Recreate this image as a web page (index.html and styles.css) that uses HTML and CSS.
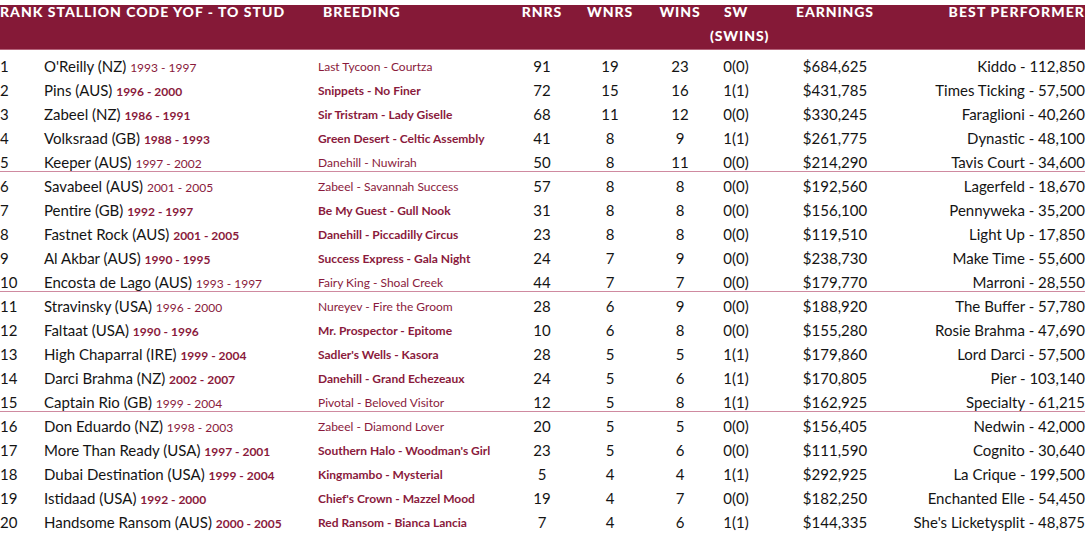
FILE: index.html
```html
<!DOCTYPE html>
<html>
<head>
<meta charset="utf-8">
<link rel="stylesheet" href="styles.css">
</head>
<body>
<div class="table">
  <div class="head">
    <div class="h-stallion">RANK STALLION CODE YOF - TO STUD</div>
    <div class="h-breeding">BREEDING</div>
    <div class="h-num">RNRS</div>
    <div class="h-num">WNRS</div>
    <div class="h-num">WINS</div>
    <div class="h-num">SW<br>(SWINS)</div>
    <div class="h-num">EARNINGS</div>
    <div class="h-best">BEST PERFORMER</div>
  </div>
  <div class="rows">
    <div class="row"><span class="rank">1</span><span class="name">O'Reilly (NZ) <span class="yr light">1993 - 1997</span></span><span class="br light">Last Tycoon - Courtza</span><span class="n">91</span><span class="n">19</span><span class="n">23</span><span class="n">0(0)</span><span class="n">$684,625</span><span class="best">Kiddo - 112,850</span></div>
    <div class="row"><span class="rank">2</span><span class="name">Pins (AUS) <span class="yr">1996 - 2000</span></span><span class="br">Snippets - No Finer</span><span class="n">72</span><span class="n">15</span><span class="n">16</span><span class="n">1(1)</span><span class="n">$431,785</span><span class="best">Times Ticking - 57,500</span></div>
    <div class="row"><span class="rank">3</span><span class="name">Zabeel (NZ) <span class="yr">1986 - 1991</span></span><span class="br">Sir Tristram - Lady Giselle</span><span class="n">68</span><span class="n">11</span><span class="n">12</span><span class="n">0(0)</span><span class="n">$330,245</span><span class="best">Faraglioni - 40,260</span></div>
    <div class="row"><span class="rank">4</span><span class="name">Volksraad (GB) <span class="yr">1988 - 1993</span></span><span class="br">Green Desert - Celtic Assembly</span><span class="n">41</span><span class="n">8</span><span class="n">9</span><span class="n">1(1)</span><span class="n">$261,775</span><span class="best">Dynastic - 48,100</span></div>
    <div class="row sep"><span class="rank">5</span><span class="name">Keeper (AUS) <span class="yr light">1997 - 2002</span></span><span class="br light">Danehill - Nuwirah</span><span class="n">50</span><span class="n">8</span><span class="n">11</span><span class="n">0(0)</span><span class="n">$214,290</span><span class="best">Tavis Court - 34,600</span></div>
    <div class="row"><span class="rank">6</span><span class="name">Savabeel (AUS) <span class="yr light">2001 - 2005</span></span><span class="br light">Zabeel - Savannah Success</span><span class="n">57</span><span class="n">8</span><span class="n">8</span><span class="n">0(0)</span><span class="n">$192,560</span><span class="best">Lagerfeld - 18,670</span></div>
    <div class="row"><span class="rank">7</span><span class="name">Pentire (GB) <span class="yr">1992 - 1997</span></span><span class="br">Be My Guest - Gull Nook</span><span class="n">31</span><span class="n">8</span><span class="n">8</span><span class="n">0(0)</span><span class="n">$156,100</span><span class="best">Pennyweka - 35,200</span></div>
    <div class="row"><span class="rank">8</span><span class="name">Fastnet Rock (AUS) <span class="yr">2001 - 2005</span></span><span class="br">Danehill - Piccadilly Circus</span><span class="n">23</span><span class="n">8</span><span class="n">8</span><span class="n">0(0)</span><span class="n">$119,510</span><span class="best">Light Up - 17,850</span></div>
    <div class="row"><span class="rank">9</span><span class="name">Al Akbar (AUS) <span class="yr">1990 - 1995</span></span><span class="br">Success Express - Gala Night</span><span class="n">24</span><span class="n">7</span><span class="n">9</span><span class="n">0(0)</span><span class="n">$238,730</span><span class="best">Make Time - 55,600</span></div>
    <div class="row sep"><span class="rank">10</span><span class="name">Encosta de Lago (AUS) <span class="yr light">1993 - 1997</span></span><span class="br light">Fairy King - Shoal Creek</span><span class="n">44</span><span class="n">7</span><span class="n">7</span><span class="n">0(0)</span><span class="n">$179,770</span><span class="best">Marroni - 28,550</span></div>
    <div class="row"><span class="rank">11</span><span class="name">Stravinsky (USA) <span class="yr light">1996 - 2000</span></span><span class="br light">Nureyev - Fire the Groom</span><span class="n">28</span><span class="n">6</span><span class="n">9</span><span class="n">0(0)</span><span class="n">$188,920</span><span class="best">The Buffer - 57,780</span></div>
    <div class="row"><span class="rank">12</span><span class="name">Faltaat (USA) <span class="yr">1990 - 1996</span></span><span class="br">Mr. Prospector - Epitome</span><span class="n">10</span><span class="n">6</span><span class="n">8</span><span class="n">0(0)</span><span class="n">$155,280</span><span class="best">Rosie Brahma - 47,690</span></div>
    <div class="row"><span class="rank">13</span><span class="name">High Chaparral (IRE) <span class="yr">1999 - 2004</span></span><span class="br">Sadler's Wells - Kasora</span><span class="n">28</span><span class="n">5</span><span class="n">5</span><span class="n">1(1)</span><span class="n">$179,860</span><span class="best">Lord Darci - 57,500</span></div>
    <div class="row"><span class="rank">14</span><span class="name">Darci Brahma (NZ) <span class="yr">2002 - 2007</span></span><span class="br">Danehill - Grand Echezeaux</span><span class="n">24</span><span class="n">5</span><span class="n">6</span><span class="n">1(1)</span><span class="n">$170,805</span><span class="best">Pier - 103,140</span></div>
    <div class="row sep"><span class="rank">15</span><span class="name">Captain Rio (GB) <span class="yr light">1999 - 2004</span></span><span class="br light">Pivotal - Beloved Visitor</span><span class="n">12</span><span class="n">5</span><span class="n">8</span><span class="n">1(1)</span><span class="n">$162,925</span><span class="best">Specialty - 61,215</span></div>
    <div class="row"><span class="rank">16</span><span class="name">Don Eduardo (NZ) <span class="yr light">1998 - 2003</span></span><span class="br light">Zabeel - Diamond Lover</span><span class="n">20</span><span class="n">5</span><span class="n">5</span><span class="n">0(0)</span><span class="n">$156,405</span><span class="best">Nedwin - 42,000</span></div>
    <div class="row"><span class="rank">17</span><span class="name">More Than Ready (USA) <span class="yr">1997 - 2001</span></span><span class="br">Southern Halo - Woodman's Girl</span><span class="n">23</span><span class="n">5</span><span class="n">6</span><span class="n">0(0)</span><span class="n">$111,590</span><span class="best">Cognito - 30,640</span></div>
    <div class="row"><span class="rank">18</span><span class="name">Dubai Destination (USA) <span class="yr">1999 - 2004</span></span><span class="br">Kingmambo - Mysterial</span><span class="n">5</span><span class="n">4</span><span class="n">4</span><span class="n">1(1)</span><span class="n">$292,925</span><span class="best">La Crique - 199,500</span></div>
    <div class="row"><span class="rank">19</span><span class="name">Istidaad (USA) <span class="yr">1992 - 2000</span></span><span class="br">Chief's Crown - Mazzel Mood</span><span class="n">19</span><span class="n">4</span><span class="n">7</span><span class="n">0(0)</span><span class="n">$182,250</span><span class="best">Enchanted Elle - 54,450</span></div>
    <div class="row"><span class="rank">20</span><span class="name">Handsome Ransom (AUS) <span class="yr">2000 - 2005</span></span><span class="br">Red Ransom - Bianca Lancia</span><span class="n">7</span><span class="n">4</span><span class="n">6</span><span class="n">1(1)</span><span class="n">$144,335</span><span class="best">She's Licketysplit - 48,875</span></div>
  </div>
</div>
</body>
</html>
```

FILE: styles.css
```css
html, body {
  margin: 0;
  padding: 0;
  background: #ffffff;
}
body {
  font-family: "Lato", "Liberation Sans", sans-serif;
  color: #141414;
  width: 1089px;
  height: 552px;
  overflow: hidden;
}
.table {
  width: 1085px;
}
.head,
.row {
  display: grid;
  grid-template-columns: 44px 274px 196px 56px 80px 60px 52px 146px 177px;
}
.head {
  height: 50px;
  background: linear-gradient(#ffffff 0, #ffffff 5px, #851937 5px, #851937 100%);
  border-bottom: 1px solid #b5627a;
  box-sizing: border-box;
  color: #ffffff;
  font-weight: 900;
  font-size: 14px;
  line-height: 24px;
  letter-spacing: 0.9px;
}
.h-stallion {
  grid-column: 1 / span 2;
  white-space: nowrap;
  letter-spacing: 1px;
}
.h-breeding {
  padding-left: 5px;
}
.h-num {
  text-align: center;
  white-space: nowrap;
}
.h-num br + * {
  margin: 0;
}
.h-best {
  text-align: right;
  white-space: nowrap;
  letter-spacing: 1.1px;
}
.rows {
  padding-top: 2px;
}
.row {
  height: 24px;
  box-sizing: border-box;
  padding-top: 6px;
  line-height: 17px;
  font-size: 15px;
  white-space: nowrap;
}
.row.sep {
  border-bottom: 1px solid #cf8aa0;
}
.yr,
.br {
  color: #8a1a3c;
  font-size: 12px;
  font-weight: 700;
}
.yr.light,
.br.light {
  font-weight: 400;
}
.n {
  text-align: center;
}
.best {
  text-align: right;
}
```
